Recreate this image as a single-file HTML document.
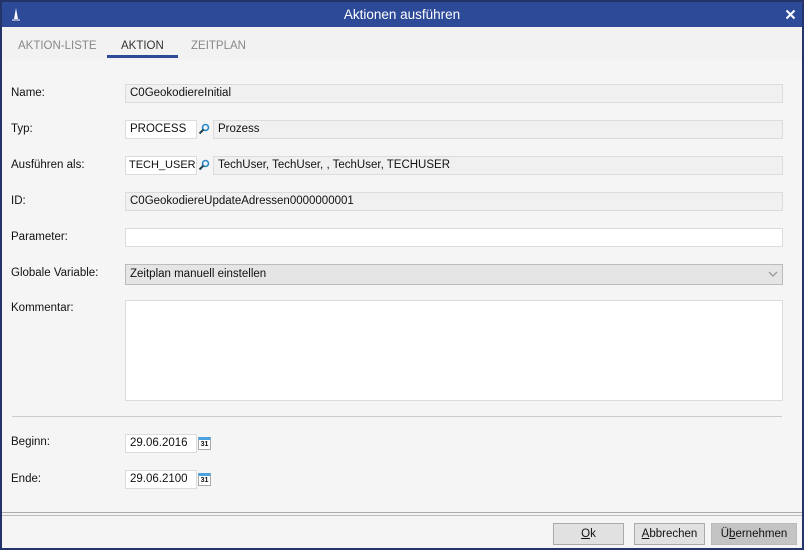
<!DOCTYPE html>
<html><head><style>
*{box-sizing:border-box;margin:0;padding:0}
body{width:804px;height:550px;overflow:hidden;font-family:"Liberation Sans","DejaVu Sans",sans-serif;font-size:11.5px;color:#111;background:#25336b;position:relative}
.win{position:absolute;left:2px;top:0;width:800px;height:548px;background:#f5f5f5;border-top:2px solid #25336b}
.title{position:absolute;left:0;top:0;width:800px;height:25px;background:#2d4a99;color:#fff;text-align:center;font-size:13.5px;line-height:25px}
.tabs{position:absolute;left:0;top:25px;width:800px;height:33px;background:#f2f2f2}
.tab{position:absolute;top:13px;font-size:11.5px;color:#888}
.ul{position:absolute;left:105px;top:28px;width:71px;height:3px;background:#2d4a99}
.lbl{position:absolute;left:9px}
.f{position:absolute;height:19px;border:1px solid #dcdcdc;background:#f0f0f0;padding-left:4px;line-height:17px;white-space:nowrap;overflow:hidden}
.w{background:#fff}
.srch{position:absolute;width:12px;height:12px}
.cal{position:absolute;width:13px;height:13px;border:1px solid #aaa;background:#fff;font-size:7px;font-weight:bold;text-align:center;line-height:9px;border-top:3px solid #4aa3df}
.btn{position:absolute;top:521px;height:22px;border:1px solid #aaa;background:#e1e1e1;text-align:center;line-height:20px}
</style></head><body>
<div class="win">
<div class="title">Aktionen ausführen
<svg style="position:absolute;left:9px;top:5px" width="10" height="15"><path d="M5 1 L3 12 L7 12 Z" fill="#fff"/><path d="M1 13 L9 13" stroke="#fff"/></svg>
<svg style="position:absolute;left:783px;top:7px" width="11" height="11"><path d="M1.5 1.5L9.5 9.5M9.5 1.5L1.5 9.5" stroke="#fff" stroke-width="2"/></svg>
</div>
<div class="tabs">
<div class="tab" style="left:16px">AKTION-LISTE</div>
<div class="tab" style="left:119px;color:#333">AKTION</div>
<div class="tab" style="left:189px">ZEITPLAN</div>
<div class="ul"></div>
</div>
<div class="lbl" style="top:85px">Name:</div>
<div class="f" style="left:123px;top:82px;width:658px">C0GeokodiereInitial</div>
<div class="lbl" style="top:121px">Typ:</div>
<div class="f w" style="left:123px;top:118px;width:72px">PROCESS</div>
<svg class="srch" style="left:196px;top:121px" viewBox="0 0 12 12"><circle cx="7.5" cy="4.5" r="3" fill="none" stroke="#2a8ac8" stroke-width="1.6"/><path d="M5.5 6.5L1.5 10.5" stroke="#245" stroke-width="2"/></svg>
<div class="f" style="left:211px;top:118px;width:570px">Prozess</div>
<div class="lbl" style="top:157px">Ausführen als:</div>
<div class="f w" style="left:123px;top:154px;width:72px;padding-left:3px;font-size:11px">TECH_USER</div>
<svg class="srch" style="left:196px;top:157px" viewBox="0 0 12 12"><circle cx="7.5" cy="4.5" r="3" fill="none" stroke="#2a8ac8" stroke-width="1.6"/><path d="M5.5 6.5L1.5 10.5" stroke="#245" stroke-width="2"/></svg>
<div class="f" style="left:211px;top:154px;width:570px">TechUser, TechUser, , TechUser, TECHUSER</div>
<div class="lbl" style="top:193px">ID:</div>
<div class="f" style="left:123px;top:190px;width:658px">C0GeokodiereUpdateAdressen0000000001</div>
<div class="lbl" style="top:229px">Parameter:</div>
<div class="f w" style="left:123px;top:226px;width:658px"></div>
<div class="lbl" style="top:265px">Globale Variable:</div>
<div class="f" style="left:123px;top:262px;width:658px;height:21px;background:#e5e5e5;border-color:#bbb;line-height:19px">Zeitplan manuell einstellen
<svg style="position:absolute;right:4px;top:6px" width="10" height="7"><path d="M1 1L5 5L9 1" stroke="#999" fill="none" stroke-width="1.3"/></svg></div>
<div class="lbl" style="top:300px">Kommentar:</div>
<div class="f w" style="left:123px;top:298px;width:658px;height:101px"></div>
<div style="position:absolute;left:10px;top:414px;width:770px;height:1px;background:#ccc"></div>
<div class="lbl" style="top:434px">Beginn:</div>
<div class="f w" style="left:123px;top:432px;width:72px">29.06.2016</div>
<div class="cal" style="left:196px;top:435px">31</div>
<div class="lbl" style="top:471px">Ende:</div>
<div class="f w" style="left:123px;top:468px;width:72px">29.06.2100</div>
<div class="cal" style="left:196px;top:471px">31</div>
<div style="position:absolute;left:0;top:510px;width:800px;height:1px;background:#aaa"></div>
<div style="position:absolute;left:0;top:513px;width:800px;height:1px;background:#bbb"></div>
<div class="btn" style="left:551px;width:71px"><u>O</u>k</div>
<div class="btn" style="left:632px;width:71px"><u>A</u>bbrechen</div>
<div class="btn" style="left:709px;width:86px;background:#c4c4c4;border-color:#bbb">Ü<u>b</u>ernehmen</div>
</div>
</body></html>
